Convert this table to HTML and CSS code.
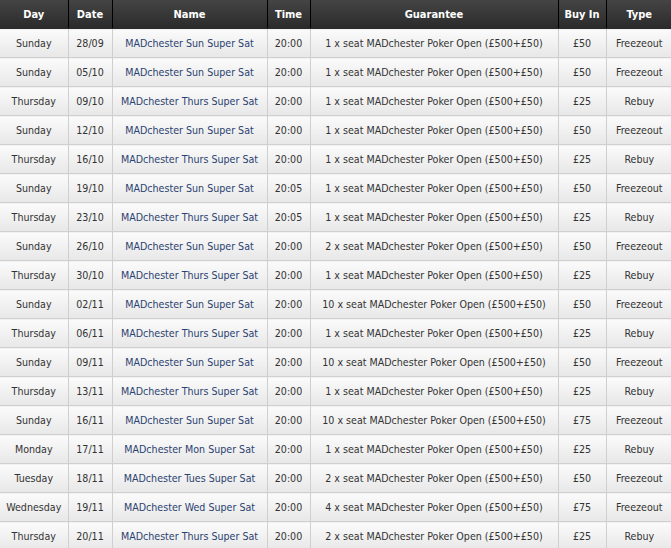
FILE: index.html
```html
<!DOCTYPE html>
<html>
<head>
<meta charset="utf-8">
<link rel="stylesheet" href="styles.css">
</head>
<body>
<table class="sched">
<colgroup>
<col class="c-day"><col class="c-date"><col class="c-name"><col class="c-time"><col class="c-guar"><col class="c-buy"><col class="c-type">
</colgroup>
<thead>
<tr><th>Day</th><th>Date</th><th>Name</th><th>Time</th><th>Guarantee</th><th>Buy In</th><th>Type</th></tr>
</thead>
<tbody>
<tr><td>Sunday</td><td>28/09</td><td class="name">MADchester Sun Super Sat</td><td>20:00</td><td>1 x seat MADchester Poker Open (£500+£50)</td><td>£50</td><td>Freezeout</td></tr>
<tr><td>Sunday</td><td>05/10</td><td class="name">MADchester Sun Super Sat</td><td>20:00</td><td>1 x seat MADchester Poker Open (£500+£50)</td><td>£50</td><td>Freezeout</td></tr>
<tr><td>Thursday</td><td>09/10</td><td class="name">MADchester Thurs Super Sat</td><td>20:00</td><td>1 x seat MADchester Poker Open (£500+£50)</td><td>£25</td><td>Rebuy</td></tr>
<tr><td>Sunday</td><td>12/10</td><td class="name">MADchester Sun Super Sat</td><td>20:00</td><td>1 x seat MADchester Poker Open (£500+£50)</td><td>£50</td><td>Freezeout</td></tr>
<tr><td>Thursday</td><td>16/10</td><td class="name">MADchester Thurs Super Sat</td><td>20:00</td><td>1 x seat MADchester Poker Open (£500+£50)</td><td>£25</td><td>Rebuy</td></tr>
<tr><td>Sunday</td><td>19/10</td><td class="name">MADchester Sun Super Sat</td><td>20:05</td><td>1 x seat MADchester Poker Open (£500+£50)</td><td>£50</td><td>Freezeout</td></tr>
<tr><td>Thursday</td><td>23/10</td><td class="name">MADchester Thurs Super Sat</td><td>20:05</td><td>1 x seat MADchester Poker Open (£500+£50)</td><td>£25</td><td>Rebuy</td></tr>
<tr><td>Sunday</td><td>26/10</td><td class="name">MADchester Sun Super Sat</td><td>20:00</td><td>2 x seat MADchester Poker Open (£500+£50)</td><td>£50</td><td>Freezeout</td></tr>
<tr><td>Thursday</td><td>30/10</td><td class="name">MADchester Thurs Super Sat</td><td>20:00</td><td>1 x seat MADchester Poker Open (£500+£50)</td><td>£25</td><td>Rebuy</td></tr>
<tr><td>Sunday</td><td>02/11</td><td class="name">MADchester Sun Super Sat</td><td>20:00</td><td>10 x seat MADchester Poker Open (£500+£50)</td><td>£50</td><td>Freezeout</td></tr>
<tr><td>Thursday</td><td>06/11</td><td class="name">MADchester Thurs Super Sat</td><td>20:00</td><td>1 x seat MADchester Poker Open (£500+£50)</td><td>£25</td><td>Rebuy</td></tr>
<tr><td>Sunday</td><td>09/11</td><td class="name">MADchester Sun Super Sat</td><td>20:00</td><td>10 x seat MADchester Poker Open (£500+£50)</td><td>£50</td><td>Freezeout</td></tr>
<tr><td>Thursday</td><td>13/11</td><td class="name">MADchester Thurs Super Sat</td><td>20:00</td><td>1 x seat MADchester Poker Open (£500+£50)</td><td>£25</td><td>Rebuy</td></tr>
<tr><td>Sunday</td><td>16/11</td><td class="name">MADchester Sun Super Sat</td><td>20:00</td><td>10 x seat MADchester Poker Open (£500+£50)</td><td>£75</td><td>Freezeout</td></tr>
<tr><td>Monday</td><td>17/11</td><td class="name">MADchester Mon Super Sat</td><td>20:00</td><td>1 x seat MADchester Poker Open (£500+£50)</td><td>£25</td><td>Rebuy</td></tr>
<tr><td>Tuesday</td><td>18/11</td><td class="name">MADchester Tues Super Sat</td><td>20:00</td><td>2 x seat MADchester Poker Open (£500+£50)</td><td>£50</td><td>Freezeout</td></tr>
<tr><td>Wednesday</td><td>19/11</td><td class="name">MADchester Wed Super Sat</td><td>20:00</td><td>4 x seat MADchester Poker Open (£500+£50)</td><td>£75</td><td>Freezeout</td></tr>
<tr><td>Thursday</td><td>20/11</td><td class="name">MADchester Thurs Super Sat</td><td>20:00</td><td>2 x seat MADchester Poker Open (£500+£50)</td><td>£25</td><td>Rebuy</td></tr>
</tbody>
</table>
</body>
</html>
```
FILE: styles.css
```css
html, body {
  margin: 0;
  padding: 0;
  background: #fff;
}
.sched {
  border-collapse: collapse;
  table-layout: fixed;
  width: 672px;
  font-family: "DejaVu Sans Condensed", "DejaVu Sans", sans-serif;
  font-stretch: condensed;
  font-size: 10.6px;
  color: #333;
}
.c-day { width: 68px; }
.c-date { width: 44px; }
.c-name { width: 155px; }
.c-time { width: 43px; }
.c-guar { width: 248px; }
.c-buy { width: 48px; }
.c-type { width: 66px; }
.sched th {
  height: 28px;
  padding: 0;
  background: linear-gradient(#444, #2b2b2b);
  color: #fff;
  font-weight: bold;
  font-size: 11px;
  text-align: center;
  border-left: 1px solid #000;
  border-bottom: 1px solid #2a2a2a;
}
.sched th:first-child { border-left: none; }
.sched td {
  height: 28px;
  padding: 0;
  text-align: center;
  white-space: nowrap;
  background: linear-gradient(#fbfbfb, #e7e7e7);
  border-left: 1px solid #cfcfcf;
  border-bottom: 1px solid #d0d0d0;
}
.sched td:first-child { border-left: none; }
.sched td.name { color: #2b4270; }
```
